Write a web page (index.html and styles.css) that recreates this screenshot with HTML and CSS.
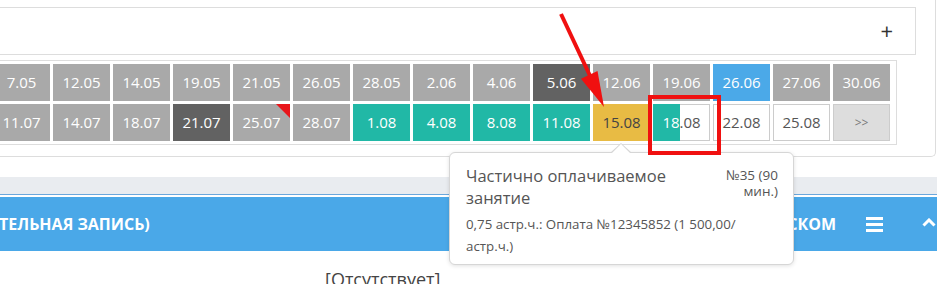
FILE: index.html
```html
<!DOCTYPE html>
<html lang="ru">
<head>
    <meta charset="UTF-8">
    <title>Расписание занятий</title>
    <link rel="stylesheet" href="styles.css">
</head>
<body>
    <div class="page">
        <div class="panel">
            <div class="add-box">
                <span class="add-btn">+</span>
            </div>
            <div class="dates">
                <div class="cell">7.05</div>
                <div class="cell">12.05</div>
                <div class="cell">14.05</div>
                <div class="cell">19.05</div>
                <div class="cell">21.05</div>
                <div class="cell">26.05</div>
                <div class="cell">28.05</div>
                <div class="cell">2.06</div>
                <div class="cell">4.06</div>
                <div class="cell dark">5.06</div>
                <div class="cell">12.06</div>
                <div class="cell">19.06</div>
                <div class="cell blue">26.06</div>
                <div class="cell">27.06</div>
                <div class="cell">30.06</div>

                <div class="cell">11.07</div>
                <div class="cell">14.07</div>
                <div class="cell">18.07</div>
                <div class="cell dark">21.07</div>
                <div class="cell flagged">25.07</div>
                <div class="cell">28.07</div>
                <div class="cell paid">1.08</div>
                <div class="cell paid">4.08</div>
                <div class="cell paid">8.08</div>
                <div class="cell paid">11.08</div>
                <div class="cell partial">15.08</div>
                <div class="cell open split">
                    <span class="fill" style="width: 49%"><span class="fill-text">18.08</span></span>18.08
                </div>
                <div class="cell open">22.08</div>
                <div class="cell open">25.08</div>
                <div class="cell more">&gt;&gt;</div>
            </div>
        </div>

        <div class="band"></div>

        <div class="bar">
            <span class="bar-title">ТЕЛЬНАЯ ЗАПИСЬ)</span>
            <span class="bar-link">С РИСКОМ</span>
            <span class="bar-menu">
                <svg width="17" height="15" viewBox="0 0 17 15">
                    <rect x="0" y="0" width="17" height="3" fill="#fff"/>
                    <rect x="0" y="6" width="17" height="3" fill="#fff"/>
                    <rect x="0" y="12" width="17" height="3" fill="#fff"/>
                </svg>
            </span>
            <span class="bar-toggle">
                <svg width="14" height="9" viewBox="0 0 14 9">
                    <polyline points="1.5,7.5 7,2 12.5,7.5" fill="none" stroke="#fff" stroke-width="3"/>
                </svg>
            </span>
        </div>

        <div class="empty">[Отсутствует]</div>
    </div>

    <div class="tooltip">
        <div class="tooltip-head">
            <div class="tooltip-title">Частично оплачиваемое занятие</div>
            <div class="tooltip-num">№35 (90 мин.)</div>
        </div>
        <div class="tooltip-body">0,75 астр.ч.: Оплата №12345852 (1 500,00/ астр.ч.)</div>
    </div>

    <!-- annotation marks -->
    <svg class="marks" width="937" height="284" viewBox="0 0 937 284">
        <line x1="561" y1="14" x2="592" y2="80" stroke="#f01010" stroke-width="4"/>
        <polygon points="604,107 597.5,71 581,78.8" fill="#f01010"/>
        <rect x="650" y="97" width="69" height="56" fill="none" stroke="#f01010" stroke-width="4"/>
    </svg>
</body>
</html>
```

FILE: styles.css
```css
body {
    margin: 0;
    font-family: "Open Sans", "Noto Sans", sans-serif;
    background-color: #fff;
    width: 937px;
    height: 284px;
    overflow: hidden;
    position: relative;
}

.page {
    width: 937px;
}

.panel {
    margin-left: -31px;
    width: 946px;
    padding: 7px 0 11px 19px;
    border: 1px solid #ddd;
    border-top: none;
    border-radius: 0 0 5px 5px;
}

.add-box {
    height: 46px;
    margin-right: 19px;
    border: 1px solid #ddd;
    display: flex;
    align-items: center;
    justify-content: flex-end;
    padding-right: 22px;
}

.add-btn {
    font-size: 22px;
    color: #333;
    line-height: 1;
    margin-top: -2px;
}

.dates {
    margin-top: 5px;
    width: max-content;
    display: grid;
    grid-template-columns: repeat(15, 57px);
    grid-auto-rows: 37px;
    gap: 3px;
    padding: 3px 6px 3px 3px;
    border: 1px solid #ddd;
}

.cell {
    background-color: #a9a9a9;
    color: #fff;
    font-size: 15px;
    line-height: 37px;
    text-align: center;
    box-sizing: border-box;
}

.cell.dark {
    background-color: #626262;
}

.cell.blue {
    background-color: #4ba9e8;
}

.cell.paid {
    background-color: #21b8a6;
}

.cell.partial {
    background-color: #e8bb44;
    color: #444;
}

.cell.open {
    background-color: #fff;
    border: 1px solid #ccc;
    color: #555;
    line-height: 35px;
}

.cell.more {
    background-color: #ddd;
    border: 1px solid #ccc;
    color: #777;
    font-size: 12px;
    line-height: 35px;
}

.cell.flagged {
    position: relative;
}

.cell.flagged::after {
    content: "";
    position: absolute;
    top: 0;
    right: 0;
    border-style: solid;
    border-width: 0 14px 14px 0;
    border-color: transparent #e8161b transparent transparent;
}

.cell.split {
    position: relative;
}

.fill {
    position: absolute;
    left: -1px;
    top: -1px;
    bottom: -1px;
    overflow: hidden;
    background-color: #21b8a6;
}

.fill-text {
    display: block;
    width: 57px;
    line-height: 37px;
    color: #fff;
}

.band {
    margin-top: 20px;
    height: 17px;
    background-color: #e9ecf0;
    border-bottom: 1px solid #6aa7dc;
}

.bar {
    margin-top: 2px;
    height: 54px;
    background-color: #4aa8e8;
    color: #fff;
    display: flex;
    align-items: center;
}

.bar-title {
    font-size: 16px;
    font-weight: bold;
    margin-left: -1px;
}

.bar-link {
    margin-left: auto;
    font-size: 16px;
    font-weight: bold;
}

.bar-menu {
    display: flex;
    margin-left: 30px;
}

.bar-toggle {
    display: flex;
    margin-left: 39px;
    margin-right: 1px;
    margin-top: -4px;
}

.empty {
    padding: 16px 0 0 325px;
    font-size: 18px;
    line-height: 24px;
    color: #444;
}

.tooltip {
    position: absolute;
    left: 449px;
    top: 152px;
    width: 312px;
    height: 97px;
    padding: 14px 15px 0 16px;
    background-color: #fff;
    border: 1px solid #d6d6d6;
    border-radius: 6px;
    box-shadow: 0 1px 4px rgba(0, 0, 0, 0.12);
    color: #555;
}

.tooltip::before,
.tooltip::after {
    content: "";
    position: absolute;
    left: 160px;
    border-style: solid;
    border-color: transparent;
}

.tooltip::before {
    top: -10px;
    border-width: 0 11px 10px 11px;
    border-bottom-color: #d6d6d6;
}

.tooltip::after {
    top: -9px;
    left: 161px;
    border-width: 0 10px 10px 10px;
    border-bottom-color: #fff;
}

.tooltip-head {
    display: flex;
    justify-content: space-between;
    gap: 12px;
}

.tooltip-title {
    font-size: 16.5px;
    line-height: 22px;
    margin-top: -2px;
}

.tooltip-num {
    width: 56px;
    flex-shrink: 0;
    text-align: right;
    font-size: 13.5px;
    line-height: 16px;
}

.tooltip-body {
    margin-top: 4px;
    font-size: 13.3px;
    line-height: 22px;
}

.marks {
    position: absolute;
    left: 0;
    top: 0;
    pointer-events: none;
}
```
